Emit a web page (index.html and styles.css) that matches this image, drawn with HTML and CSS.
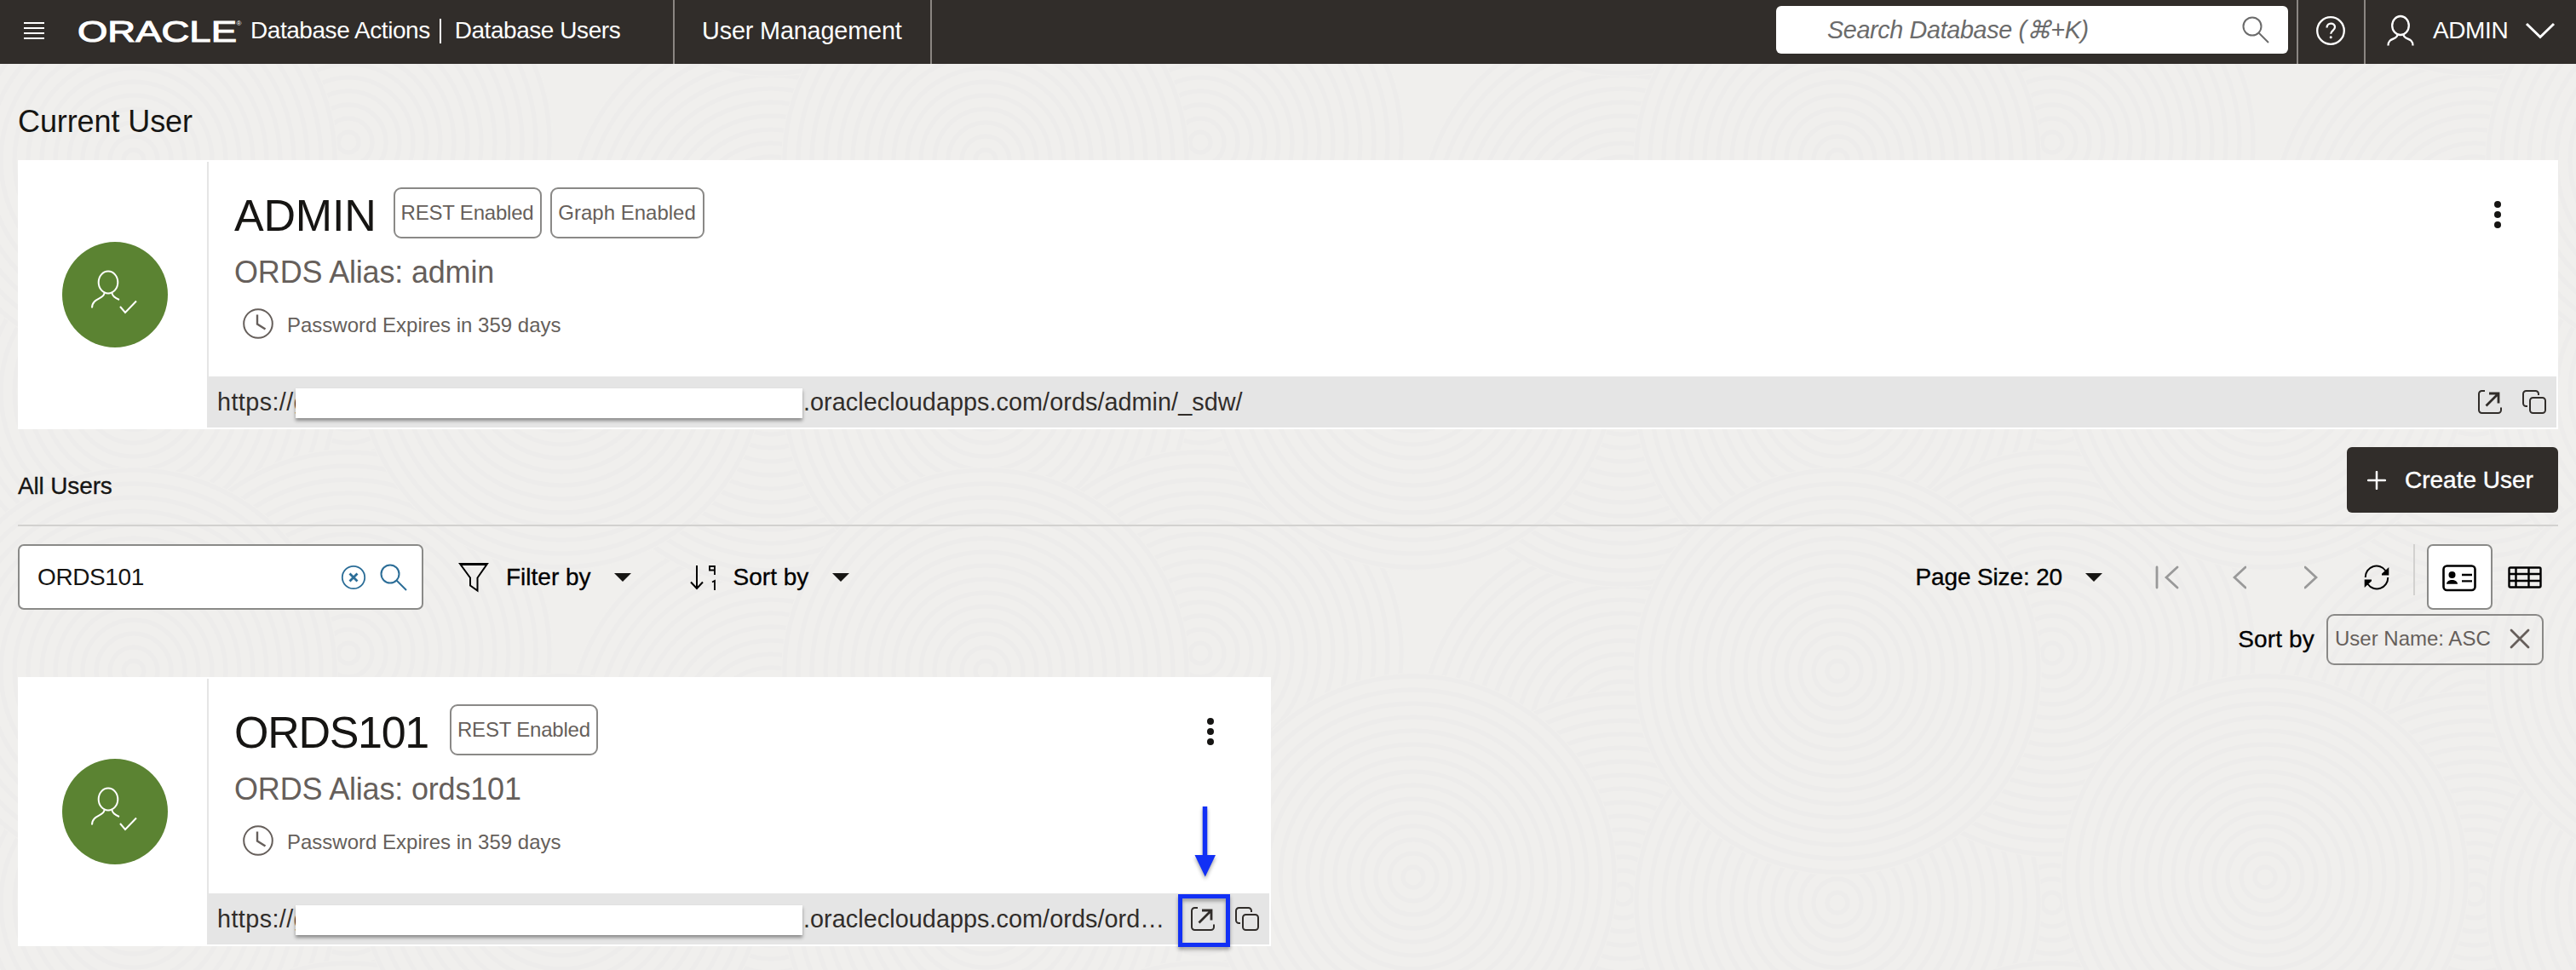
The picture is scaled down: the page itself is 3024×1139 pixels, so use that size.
FILE: index.html
```html
<!DOCTYPE html>
<html lang="en">
<head>
<meta charset="utf-8">
<title>Database Users</title>
<link rel="stylesheet" href="styles.css">
</head>
<body>
<svg class="texture" width="3024" height="1139" aria-hidden="true">
  <defs>
    <g id="disc">
      <circle class="disc-base" r="240"/>
      <circle r="236"/><circle r="220"/><circle r="204"/><circle r="188"/><circle r="172"/><circle r="156"/><circle r="140"/><circle r="124"/><circle r="108"/><circle r="92"/><circle r="76"/><circle r="60"/><circle r="44"/><circle r="28"/><circle r="12"/>
    </g>
    <pattern id="swirls" width="1000" height="600" patternUnits="userSpaceOnUse">
      <use href="#disc" x="409" y="460"/><use href="#disc" x="409" y="-140"/>
      <use href="#disc" x="905" y="260"/><use href="#disc" x="-95" y="260"/>
      <use href="#disc" x="905" y="450"/><use href="#disc" x="905" y="-150"/><use href="#disc" x="-95" y="450"/><use href="#disc" x="-95" y="-150"/>
      <use href="#disc" x="157" y="460"/><use href="#disc" x="157" y="-140"/><use href="#disc" x="1157" y="460"/><use href="#disc" x="1157" y="-140"/>
      <use href="#disc" x="409" y="167"/><use href="#disc" x="409" y="767"/>
      <use href="#disc" x="659" y="430"/><use href="#disc" x="659" y="-170"/>
      <use href="#disc" x="157" y="188"/><use href="#disc" x="1157" y="188"/><use href="#disc" x="157" y="788"/><use href="#disc" x="1157" y="788"/>
    </pattern>
    <symbol id="i-open" viewBox="0 0 28 28">
      <path d="M8 1H4.500a3.500 3.500 0 0 0-3.500 3.500v19a3.500 3.500 0 0 0 3.500 3.500h19a3.500 3.500 0 0 0 3.500-3.500V20.500" stroke-width="2"/>
      <path d="M13 4h11v11.500M24 4 9.500 18.500" stroke-width="2.800"/>
    </symbol>
    <symbol id="i-copy" viewBox="0 0 28 28">
      <path d="M6 19H4.500a3.500 3.500 0 0 1-3.500-3.500v-11a3.500 3.500 0 0 1 3.500-3.500h11a3.500 3.500 0 0 1 3.500 3.500V6" stroke-width="2"/>
      <rect x="9" y="9" width="18" height="18" rx="3.500" stroke-width="2"/>
    </symbol>
    <symbol id="i-search" viewBox="0 0 32 32">
      <circle cx="12" cy="12" r="10.500"/><path d="M19.500 19.500 31 31"/>
    </symbol>
    <symbol id="i-clock" viewBox="0 0 36 36">
      <circle cx="18" cy="18" r="16.800" stroke-width="2"/><path d="M17 7.500V18.500L26.500 24.500" stroke-width="2.400"/>
    </symbol>
    <symbol id="i-dots" viewBox="0 0 8 32">
      <circle cx="4" cy="4" r="4"/><circle cx="4" cy="16" r="4"/><circle cx="4" cy="28" r="4"/>
    </symbol>
    <symbol id="i-usercheck" viewBox="0 0 124 124">
      <ellipse cx="54" cy="47.500" rx="11.300" ry="13"/>
      <path d="M49.500 60c0 7.500-14.500 5.500-14.500 17.500M58.500 60c0 4 4 6 8.500 8M68 76l6 7 13-13.500"/>
    </symbol>
    <symbol id="i-down" viewBox="0 0 20 10"><path d="M0 0h20L10 10z"/></symbol>
  </defs>
  <rect class="ground" width="3024" height="1139" fill="url(#swirls)"/>
</svg>

<header class="topbar">
  <div class="brand">
    <svg class="menu" width="24" height="20" viewBox="0 0 24 20"><path d="M0 1h24M0 7h24M0 13h24M0 19h24"/></svg>
    <svg class="logo" width="192" height="28" viewBox="0 0 192 28" role="img" aria-label="Oracle">
      <text class="logo-word" x="-1" y="26.500" textLength="187" lengthAdjust="spacingAndGlyphs">ORACLE</text>
      <text class="logo-reg" x="185.500" y="8">®</text>
    </svg>
    <span class="product">Database Actions</span>
    <i class="pipe"></i>
    <span class="product">Database Users</span>
  </div>
  <div class="tab">User Management</div>
  <div class="search-global">
    <span>Search Database (⌘+K)</span>
    <svg width="32" height="32" class="line"><use href="#i-search"/></svg>
  </div>
  <div class="help">
    <svg width="34" height="34" viewBox="0 0 34 34"><circle cx="17" cy="17" r="15.800"/><path d="M12.500 13.500c0-6.500 9.500-6.500 9.500-.7 0 4-4.800 4-4.800 8"/><circle class="dot" cx="17.200" cy="24.800" r="1.500"/></svg>
  </div>
  <div class="account">
    <svg width="32" height="38" viewBox="0 0 32 38"><ellipse cx="16" cy="13" rx="9.800" ry="11"/><path d="M12.500 23.500c0 6.500-11 3-11 13M19.500 23.500c0 6.500 11 3 11 13"/></svg>
    <span>ADMIN</span>
    <svg width="36" height="20" viewBox="0 0 36 20"><path class="thick" d="M2 2 18 17.500 34 2"/></svg>
  </div>
</header>

<main>
  <h1>Current User</h1>

  <section class="card">
    <div class="side"><div class="avatar"><svg width="124" height="124"><use href="#i-usercheck"/></svg></div></div>
    <div class="body">
      <div class="info">
        <div>
          <div class="title"><h2>ADMIN</h2><span class="badge rest">REST Enabled</span><span class="badge graph">Graph Enabled</span></div>
          <p class="alias">ORDS Alias: admin</p>
          <p class="expiry"><svg width="36" height="36" class="line"><use href="#i-clock"/></svg><span>Password Expires in 359 days</span></p>
        </div>
        <svg class="kebab" width="8" height="32"><use href="#i-dots"/></svg>
      </div>
      <div class="url">
        <span class="scheme">https://g</span><i class="mask"></i><span class="host">.oraclecloudapps.com/ords/admin/_sdw/</span>
        <div class="actions"><svg width="28" height="28" class="line"><use href="#i-open"/></svg><svg width="28" height="28" class="line"><use href="#i-copy"/></svg></div>
      </div>
    </div>
  </section>

  <div class="list-head">
    <h3>All Users</h3>
    <button class="create"><svg width="22" height="22" viewBox="0 0 22 22"><path d="M11 1v20M1 11h20"/></svg>Create User</button>
  </div>

  <div class="toolbar">
    <div class="search-users">
      <span>ORDS101</span>
      <svg width="30" height="30" viewBox="0 0 30 30"><circle cx="15" cy="15" r="13.200" stroke-width="1.800"/><path d="M10.500 10.500l9 9M19.500 10.500l-9 9" stroke-width="2.800"/></svg>
      <svg width="32" height="32" class="find"><use href="#i-search"/></svg>
    </div>
    <svg class="ico-filter" width="36" height="36" viewBox="0 0 36 36"><path d="M2 2h32L22.500 18.500v15L14 27.500v-9z"/><path d="M2 2.500h32" stroke-width="3"/></svg>
    <span class="t-filter">Filter by</span>
    <svg class="down" width="20" height="10"><use href="#i-down"/></svg>
    <svg class="ico-sort" width="32" height="30" viewBox="0 0 32 30"><path d="M8 1v27M1 20.500l7 7.500 7-7.500"/><path d="M29 1v11M29 2h-6v4.500h6M26 20.500l3-1.500v11" stroke-width="1.800"/></svg>
    <span class="t-sort">Sort by</span>
    <svg class="down" width="20" height="10"><use href="#i-down"/></svg>
    <span class="t-page">Page Size: 20</span>
    <svg class="down page" width="20" height="10"><use href="#i-down"/></svg>
    <svg class="nav first" width="28" height="28" viewBox="0 0 28 28"><path d="M2 2v24M26 2 13 14l13 12"/></svg>
    <svg class="nav prev" width="16" height="28" viewBox="0 0 16 28"><path d="M15 2 2 14l13 12"/></svg>
    <svg class="nav next" width="16" height="28" viewBox="0 0 16 28"><path d="M1 2l13 12L1 26"/></svg>
    <svg class="refresh" width="30" height="30" viewBox="0 0 30 30"><path d="M1.800 15A13 13 0 0 1 25.500 7.200M28.200 15A13 13 0 0 1 4.500 22.800"/><path class="solid" d="M29.300 3v9.500h-8.300v-1.800zM.7 27V17.500h8.300v1.800z"/></svg>
    <i class="sep"></i>
    <div class="view-on"><svg width="40" height="32" viewBox="0 0 40 32"><rect x="1.500" y="1.500" width="37" height="28.500" rx="4"/><circle class="solid" cx="11.500" cy="12" r="4"/><path class="solid" d="M5 22.800c0-6.500 13-6.500 13 0z"/><path d="M23 12h12M23 19.300h12" stroke-width="2.300"/></svg></div>
    <svg class="table" width="40" height="26" viewBox="0 0 40 26"><rect x="1.500" y="1.500" width="37" height="23" rx="1.500"/><path d="M2 9h36M2 17h36M9.500 2v22M24.500 2v22"/></svg>
  </div>

  <div class="chips">
    <span>Sort by</span>
    <div class="chip">User Name: ASC<svg width="24" height="24" viewBox="0 0 24 24"><path d="M2 2l20 20M22 2 2 22"/></svg></div>
  </div>

  <section class="card half">
    <div class="side"><div class="avatar"><svg width="124" height="124"><use href="#i-usercheck"/></svg></div></div>
    <div class="body">
      <div class="info">
        <div>
          <div class="title"><h2 class="tight">ORDS101</h2><span class="badge rest">REST Enabled</span></div>
          <p class="alias">ORDS Alias: ords101</p>
          <p class="expiry"><svg width="36" height="36" class="line"><use href="#i-clock"/></svg><span>Password Expires in 359 days</span></p>
        </div>
        <svg class="kebab" width="8" height="32"><use href="#i-dots"/></svg>
      </div>
      <div class="url">
        <span class="scheme">https://g</span><i class="mask"></i><span class="host">.oraclecloudapps.com/ords/ord…</span>
        <div class="actions"><svg width="28" height="28" class="line"><use href="#i-open"/></svg><svg width="28" height="28" class="line"><use href="#i-copy"/></svg></div>
      </div>
    </div>
    <svg class="callout" width="80" height="176" viewBox="0 0 80 176"><path d="M36.500 4v60" stroke-width="5.500"/><path class="head" d="M24.500 61h24.500L36.800 86.500z"/><rect x="7.500" y="109.500" width="56" height="57" stroke-width="5"/></svg>
  </section>
</main>
</body>
</html>
```
FILE: styles.css
```css
* { box-sizing: border-box; margin: 0; padding: 0; }
body {
  width: 3024px;
  height: 1139px;
  overflow: hidden;
  position: relative;
  background: #f0efed;
  color: #161513;
  font: 28px/40px "Liberation Sans", Arial, sans-serif;
}
svg { display: block; flex: none; fill: none; stroke: currentColor; }
i { display: block; flex: none; }
span { white-space: nowrap; }
h1, h2, h3 { font-weight: 400; }

.texture { position: absolute; left: 0; top: 0; z-index: -1; }
.texture .ground { stroke: none; }
#disc circle { fill: none; stroke: #edeceb; stroke-width: 5; }
#disc .disc-base { fill: #f0efed; stroke: none; }
.line { stroke-width: 2; }

/* top bar */
.topbar { display: flex; align-items: stretch; height: 75px; background: #312d2a; color: #fff; }
.topbar > div { display: flex; align-items: center; }
.brand { width: 790px; padding: 0 0 4px 28px; }
.menu { stroke-width: 2; margin-right: 40px; }
.logo { margin-right: 10px; overflow: visible; }
.logo text { fill: #fff; }
.logo-word { font-size: 35px; stroke: #fff; stroke-width: 1.100; }
.logo-reg { font-size: 8px; stroke: none; }
.product { letter-spacing: -0.450px; }
.pipe { width: 2px; height: 29px; margin: 1px 16px 0 11px; background: #fff; }
.tab { width: 304px; padding: 0 0 3px 32px; border: solid #8b8682; border-width: 0 2px; font-size: 28.800px; letter-spacing: -0.150px; white-space: nowrap; }
.topbar .search-global {
  width: 601px; height: 56px; margin: 7px 10px 0 auto; padding: 0 22px 0 60px;
  justify-content: space-between; background: #fff; border-radius: 6px;
  color: #6b6b6b; font-size: 28.800px; font-style: italic; letter-spacing: -0.380px;
}
.help { width: 79px; padding: 0 0 4px 21px; border-left: 2px solid #8b8682; }
.help svg, .account svg { stroke-width: 2.300; }
.help .dot { fill: #fff; stroke: none; }
.account { width: 249px; padding: 0 0 4px 25px; border-left: 2px solid #8b8682; }
.account span { margin: 0 20px 0 22px; letter-spacing: -0.400px; }
.account .thick { stroke-width: 3; }

main { padding: 38px 21px 0; }
h1 { font-size: 36px; line-height: 60px; letter-spacing: -0.100px; }

/* user card */
.card { position: relative; display: flex; height: 316px; margin-top: 15px; border: 2px solid #fff; background: #fff; }
.half { width: 1471px; margin-top: 14px; }
.side { display: flex; align-items: center; justify-content: center; width: 222px; padding-left: 4px; border-right: 2px solid #e5e5e5; flex: none; }
.avatar { width: 124px; height: 124px; border-radius: 50%; background: #5b8332; color: #fff; }
.avatar svg { stroke-width: 2; }
.body { flex: 1; min-width: 0; }
.info { display: flex; justify-content: space-between; height: 252px; padding: 30px 65px 0 30px; }
.kebab { margin-top: 16px; fill: #161513; stroke: none; }
.title { display: flex; height: 60px; gap: 10px; }
h2 { margin-right: 10px; font-size: 52px; line-height: 67px; letter-spacing: -0.200px; }
h2.tight { margin-right: 15px; letter-spacing: -1.300px; }
.badge { height: 60px; border: 2px solid #8a8987; border-radius: 9px; color: #665f5b; font-size: 24px; line-height: 55px; text-align: center; }
.rest { width: 174px; letter-spacing: -0.200px; }
.graph { width: 181px; }
.alias { margin-top: 20px; color: #665f5b; font-size: 36px; letter-spacing: -0.180px; }
.expiry { display: flex; gap: 16px; margin: 22px 0 0 10px; height: 36px; color: #665f5b; font-size: 24px; line-height: 39px; }
.url { display: flex; align-items: center; height: 60px; padding: 0 12px 0 10px; background: #e5e5e5; color: #312d2a; font-size: 28.800px; }
.scheme { width: 92px; letter-spacing: 0.400px; }
/* covers the host prefix, whose first letter starts just before it */
.mask { position: relative; width: 595px; height: 35px; margin-top: 3px; background: #fff; box-shadow: 0 3px 4px rgba(0, 0, 0, .4); }
.host { margin-left: 1px; letter-spacing: 0.050px; }
.actions { display: flex; gap: 24px; margin-left: auto; }
.callout { position: absolute; left: 1355px; top: 146px; color: #1230f5; overflow: visible; filter: drop-shadow(0 3px 2px rgba(0, 0, 0, .35)); }
.callout .head { fill: #1230f5; stroke: none; }

/* list heading */
.list-head { display: flex; justify-content: space-between; height: 93px; margin-top: 21px; border-bottom: 2px solid #d2d1cf; }
h3 { font-size: 28px; line-height: 91px; -webkit-text-stroke: 0.300px; letter-spacing: -0.150px; }
.create { display: flex; align-items: center; gap: 22px; width: 248px; height: 77px; padding-left: 24px; border: 0; border-radius: 6px; background: #312d2a; color: #fff; font: inherit; white-space: nowrap; -webkit-text-stroke: 0.400px; }
.create svg { stroke-width: 2.500; stroke-linecap: round; }

/* toolbar */
.toolbar { display: flex; align-items: center; height: 77px; margin-top: 21px; color: #000; }
.search-users { display: flex; align-items: center; width: 476px; height: 77px; padding: 0 17px 0 21px; border: 2px solid #8a8a88; border-radius: 7px; background: #fff; color: #2b6d97; }
.search-users span { flex: 1; color: #161513; letter-spacing: -0.400px; }
.find { margin: 0 0 0 16px; stroke-width: 2; }
.ico-filter { margin-left: 41px; stroke-width: 2; }
.t-filter, .t-sort, .t-page, .chips > span { -webkit-text-stroke: 0.300px; }
.t-filter { margin: 0 27px 0 20px; }
.down { fill: #161513; stroke: none; }
.ico-sort { margin-left: 69px; stroke-width: 2; }
.t-sort { margin: 0 28px 0 19px; }
.t-page { margin-left: auto; letter-spacing: -0.150px; }
.page { margin: 0 62px 0 27px; }
.nav { stroke: #999; stroke-width: 2.800; stroke-linecap: round; }
.prev { margin-left: 63px; }
.next { margin-left: 68px; }
.refresh { margin-left: 54px; stroke-width: 2; }
.solid { fill: currentColor; stroke: none; }
.sep { width: 2px; height: 60px; margin: 0 14px 17px 28px; background: #d2d1cf; }
.view-on { width: 77px; height: 77px; padding: 22px 0 0 16px; border: 2px solid #8a8a88; border-radius: 7px; background: #fff; }
.view-on svg { stroke-width: 2.600; }
.table { margin: 0 19px 0 18px; stroke-width: 2.400; }

.chips { display: flex; align-items: center; justify-content: flex-end; height: 60px; margin-top: 5px; padding-right: 17px; color: #000; }
.chips > span { margin-right: 14px; letter-spacing: 0.150px; }
.chip { display: flex; align-items: center; justify-content: space-between; width: 255px; height: 60px; padding: 0 14px 2px 8px; border: 2px solid #8a8987; border-radius: 9px; color: #665f5b; font-size: 24px; white-space: nowrap; }
.chip svg { stroke-width: 2.800; stroke-linecap: round; }
```
